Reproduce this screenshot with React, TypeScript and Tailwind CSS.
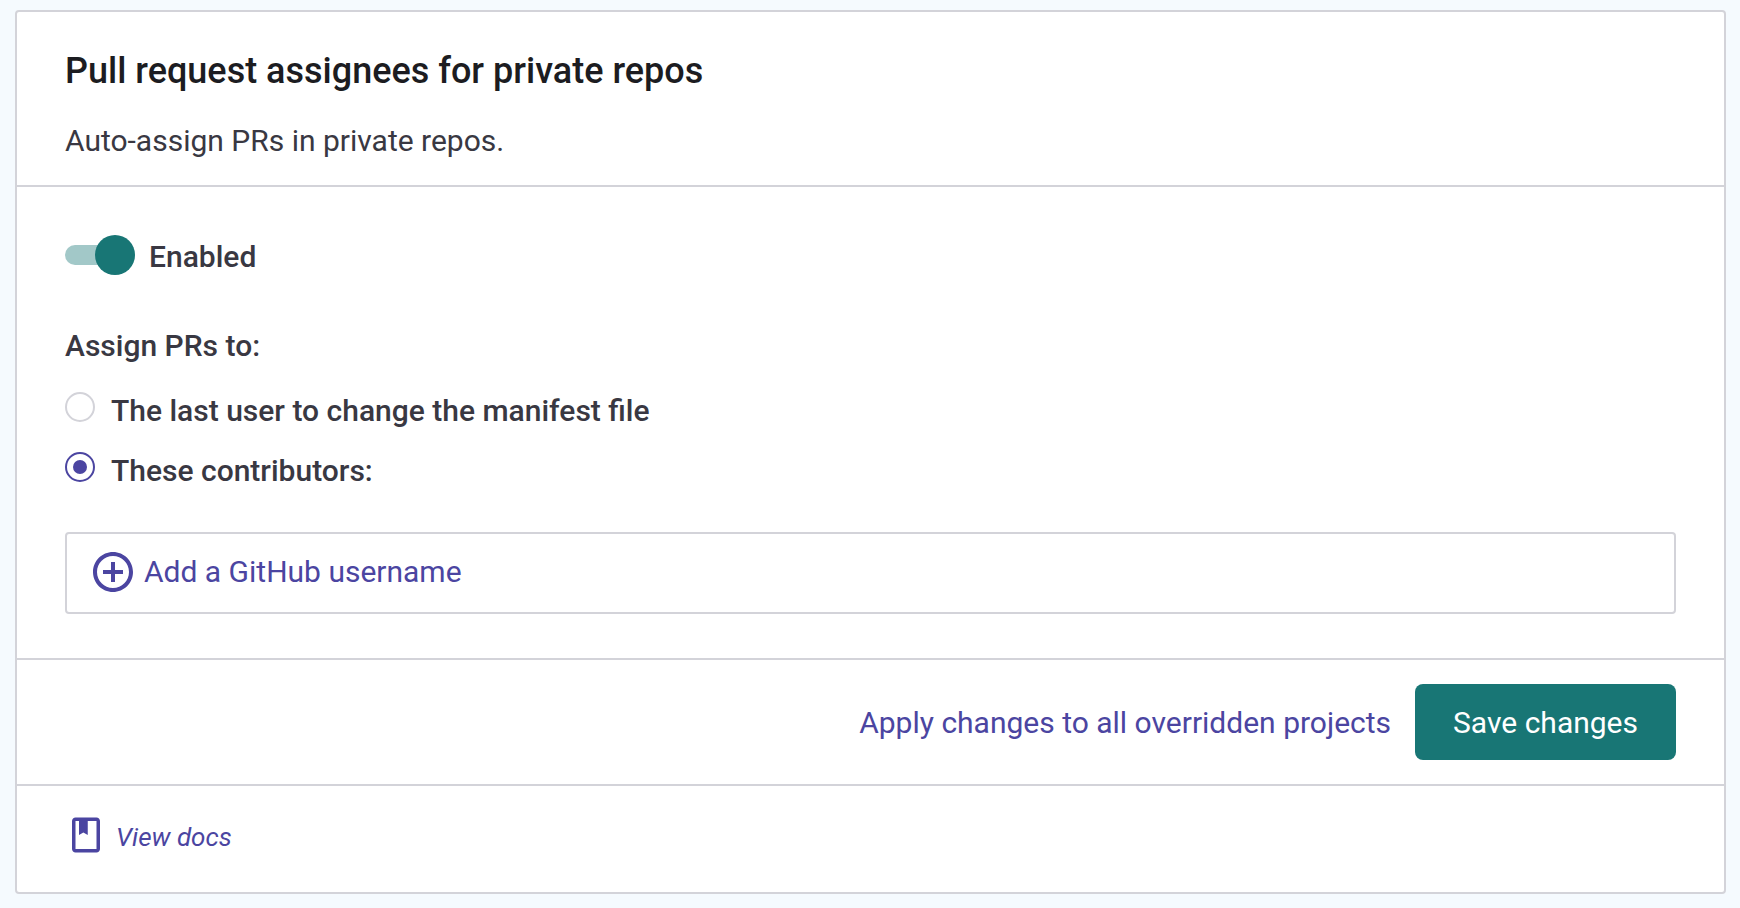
import { useState } from 'react';

const targets = [
  { value: 'last-user', label: 'The last user to change the manifest file' },
  { value: 'contributors', label: 'These contributors:' },
];

export default function App() {
  const [enabled, setEnabled] = useState(true);
  const [target, setTarget] = useState('contributors');

  return (
    <main className="min-h-screen bg-[#f5fafe] pt-[10px] pr-[14px] pb-[14px] pl-[15px] font-[Roboto,sans-serif] text-[30px] leading-[40px] text-[#393842]">
      <section className="rounded-[4px] border-2 border-[#d3d3d9] bg-white">
        <header className="border-b-2 border-[#d3d3d9] px-12 pt-[39px] pb-6">
          <h1 className="text-[36px] font-medium text-[#1c1c21]">Pull request assignees for private repos</h1>
          <p className="mt-[30px]">Auto-assign PRs in private repos.</p>
        </header>

        <div className="border-b-2 border-[#d3d3d9] px-12 pt-12 pb-11">
          <label className="flex w-fit items-start gap-[14px] leading-[44px] font-medium">
            <input
              type="checkbox"
              role="switch"
              checked={enabled}
              onChange={(e) => setEnabled(e.target.checked)}
              className="peer sr-only"
            />
            <span className="mt-[10px] flex h-5 w-[70px] items-center rounded-full bg-[#c9c9cf] peer-checked:justify-end peer-checked:bg-[#a2c8c8] peer-checked:[&>span]:bg-[#187675]">
              <span className="size-10 rounded-full bg-[#727184]" />
            </span>
            Enabled
          </label>

          <fieldset className="mt-[47px] font-medium">
            <legend>Assign PRs to:</legend>
            <div className="mt-[25px] flex flex-col gap-5">
              {targets.map((t) => (
                <label key={t.value} className="flex w-fit items-start gap-4">
                  <input
                    type="radio"
                    name="target"
                    value={t.value}
                    checked={target === t.value}
                    onChange={() => setTarget(t.value)}
                    className="mt-px grid size-[30px] shrink-0 appearance-none place-items-center rounded-full border-2 border-[#d3d3d9] bg-white checked:border-[#4b45a1] checked:before:size-[14px] checked:before:rounded-full checked:before:bg-[#4b45a1]"
                  />
                  {t.label}
                </label>
              ))}
            </div>
          </fieldset>

          <div className="mt-[41px] rounded-[4px] border-2 border-[#d3d3d9] px-[26px] pt-[18px] pb-5">
            <button type="button" className="flex items-center gap-[11px] text-[#4b45a1]">
              <svg viewBox="2 2 20 20" className="size-10" fill="currentColor" aria-hidden="true">
                <path d="M13 7h-2v4H7v2h4v4h2v-4h4v-2h-4V7zm-1-5C6.48 2 2 6.48 2 12s4.48 10 10 10 10-4.48 10-10S17.52 2 12 2zm0 18c-4.41 0-8-3.59-8-8s3.59-8 8-8 8 3.59 8 8-3.59 8-8 8z" />
              </svg>
              Add a GitHub username
            </button>
          </div>
        </div>

        <div className="flex items-center justify-end gap-6 border-b-2 border-[#d3d3d9] px-12 py-6">
          <button type="button" className="pt-[19px] pb-[17px] text-[#4b45a1]">Apply changes to all overridden projects</button>
          <button type="button" className="rounded-lg bg-[#187675] px-[38px] pt-[19px] pb-[17px] text-white">Save changes</button>
        </div>

        <footer className="px-12 pt-7 pb-8">
          <a href="#docs" className="flex w-fit items-start gap-[9px] text-[26px] leading-[46px] text-[#4b45a1] italic">
            <svg viewBox="0 0 24 24" className="size-[42px]" fill="currentColor" aria-hidden="true">
              <path d="M18 2H6c-1.1 0-2 .9-2 2v16c0 1.1.9 2 2 2h12c1.1 0 2-.9 2-2V4c0-1.1-.9-2-2-2zm0 18H6V4h2v8l2.5-1.5L13 12V4h5v16z" />
            </svg>
            View docs
          </a>
        </footer>
      </section>
    </main>
  );
}
